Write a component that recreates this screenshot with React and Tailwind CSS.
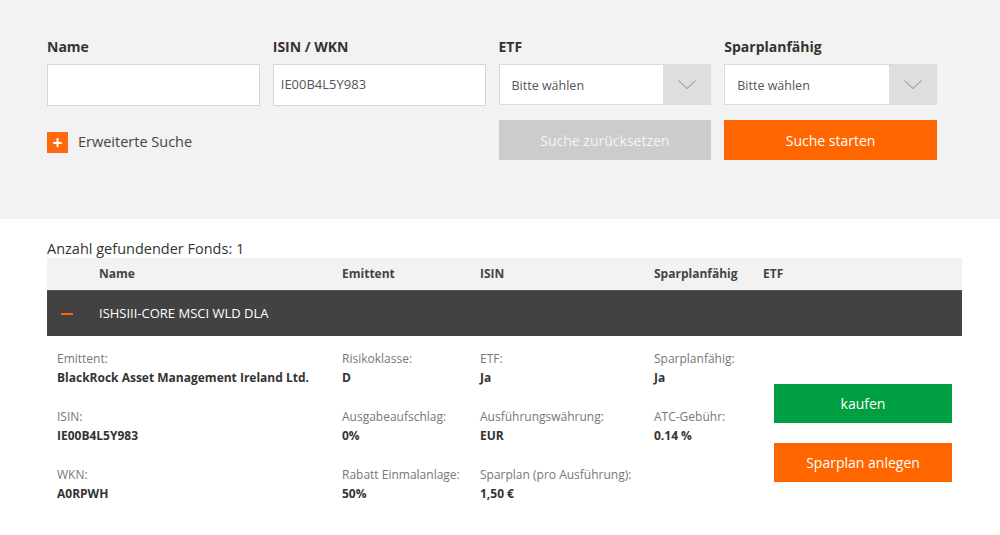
const DETAILS = [
  [
    { label: 'Emittent:', value: 'BlackRock Asset Management Ireland Ltd.' },
    { label: 'ISIN:', value: 'IE00B4L5Y983' },
    { label: 'WKN:', value: 'A0RPWH' },
  ],
  [
    { label: 'Risikoklasse:', value: 'D' },
    { label: 'Ausgabeaufschlag:', value: '0%' },
    { label: 'Rabatt Einmalanlage:', value: '50%' },
  ],
  [
    { label: 'ETF:', value: 'Ja' },
    { label: 'Ausführungswährung:', value: 'EUR' },
    { label: 'Sparplan (pro Ausführung):', value: '1,50 €' },
  ],
  [
    { label: 'Sparplanfähig:', value: 'Ja' },
    { label: 'ATC-Gebühr:', value: '0.14 %' },
  ],
]

const COL_W = ['w-[285px]', 'w-[138px]', 'w-[174px]', 'w-[120px]']

function Select() {
  return (
    <div className="flex h-[41px] bg-white border border-[#dcdcdc]">
      <div className="flex-1 flex items-center pl-3 pt-[3px] text-[12.5px] text-[#555]">Bitte wählen</div>
      <div className="w-[47px] bg-[#dedede] flex items-center justify-center">
        <svg width="18" height="10" viewBox="0 0 18 10" fill="none">
          <polyline points="0.5,0.5 9,8.5 17.5,0.5" stroke="#8a8a8a" strokeWidth="1" />
        </svg>
      </div>
    </div>
  )
}

export default function App() {
  return (
    <div className="min-h-screen bg-white text-[#333]" style={{ fontFamily: '"Open Sans", Lato, sans-serif' }}>
      {/* Suchformular */}
      <div className="bg-[#f2f2f2] h-[219px] pt-[36px] pl-[47px]">
        <div className="grid grid-cols-4 w-[890px] gap-x-[13px]">
          <div className="text-[14px] font-bold mb-[7px]">Name</div>
          <div className="text-[14px] font-bold mb-[7px]">ISIN / WKN</div>
          <div className="text-[14px] font-bold mb-[7px]">ETF</div>
          <div className="text-[14px] font-bold mb-[7px]">Sparplanfähig</div>

          <div className="h-[42px] bg-white border border-[#d6d6d6]" />
          <div className="h-[42px] bg-white border border-[#d6d6d6] flex items-center pl-[7px] text-[13px] text-[#555]">
            IE00B4L5Y983
          </div>
          <Select />
          <Select />

          <div className="col-span-2 flex items-center gap-[10px] mt-[14px] h-[40px] pt-[4px]">
            <span className="w-[21px] h-[21px] bg-[#ff6a0d] text-white flex items-center justify-center text-[17px] font-bold leading-none">+</span>
            <span className="text-[14.5px] text-[#444]">Erweiterte Suche</span>
          </div>
          <button className="mt-[14px] h-[40px] bg-[#cccccc] text-[#f4f4f4] text-[14px]">Suche zurücksetzen</button>
          <button className="mt-[14px] h-[40px] bg-[#ff6600] text-white text-[14px]">Suche starten</button>
        </div>
      </div>

      {/* Ergebnisse */}
      <div className="pl-[47px] pt-[21px] w-[962px]">
        <div className="text-[14.5px] leading-[18px] text-[#333]">Anzahl gefundender Fonds: 1</div>
        <div className="flex items-center h-[32px] bg-[#f2f2f2] text-[12px] font-bold text-[#444]">
          <span className="w-[295px] pl-[52px]">Name</span>
          <span className="w-[138px]">Emittent</span>
          <span className="w-[174px]">ISIN</span>
          <span className="w-[109px]">Sparplanfähig</span>
          <span>ETF</span>
        </div>
        <div className="flex items-center h-[46px] bg-[#424242] border-t border-[#555]">
          <span className="w-[12px] h-[2px] bg-[#ff6600] ml-[14px] mr-[26px]" />
          <span className="text-white text-[13px]">ISHSIII-CORE MSCI WLD DLA</span>
        </div>

        <div className="flex pl-[10px] pt-[13px]">
          {DETAILS.map((col, ci) => (
            <div key={ci} className={`${COL_W[ci]} flex flex-col gap-[20px]`}>
              {col.map((d) => (
                <div key={d.label} className="text-[12px]">
                  <div className="text-[#777] leading-[20px]">{d.label}</div>
                  <div className="font-bold text-[#333] leading-[18px]">{d.value}</div>
                </div>
              ))}
            </div>
          ))}
          <div className="flex flex-col gap-[20px] pt-[35px]">
            <button className="w-[178px] h-[39px] bg-[#00a042] text-white text-[14px]">kaufen</button>
            <button className="w-[178px] h-[39px] bg-[#ff6600] text-white text-[14px]">Sparplan anlegen</button>
          </div>
        </div>
      </div>
    </div>
  )
}
